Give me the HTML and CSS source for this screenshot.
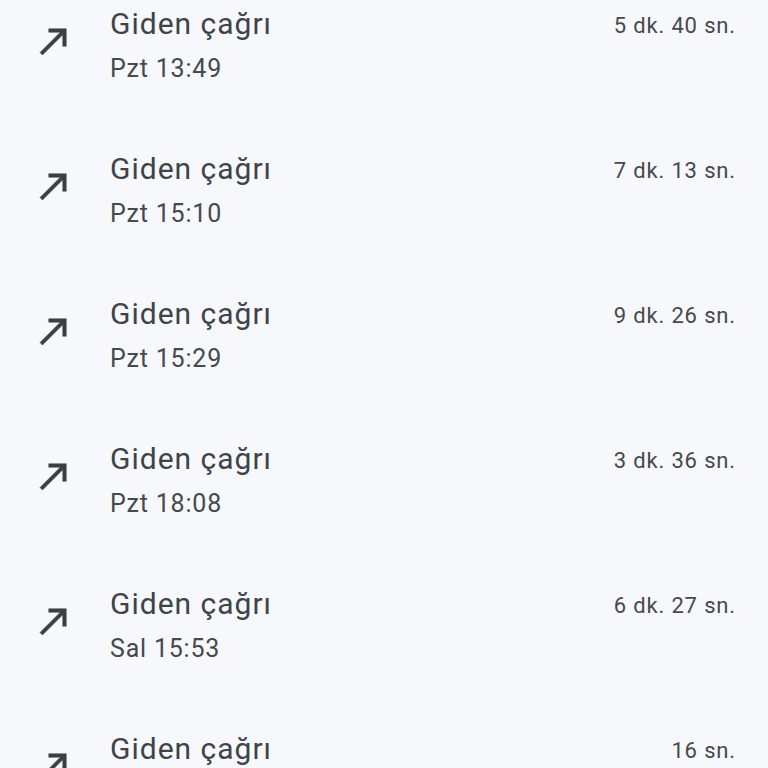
FILE: index.html
```html
<!DOCTYPE html>
<html lang="tr">
<head>
<meta charset="utf-8">
<link rel="stylesheet" href="styles.css">
</head>
<body>
<ul class="calls">
  <li class="call">
    <svg class="icon" viewBox="0 0 24 24"><path d="M9 5v2h6.59L4 18.59 5.41 20 17 8.41V15h2V5z"/></svg>
    <div class="info"><div class="title">Giden çağrı</div><div class="time">Pzt 13:49</div></div>
    <div class="dur">5 dk. 40 sn.</div>
  </li>
  <li class="call">
    <svg class="icon" viewBox="0 0 24 24"><path d="M9 5v2h6.59L4 18.59 5.41 20 17 8.41V15h2V5z"/></svg>
    <div class="info"><div class="title">Giden çağrı</div><div class="time">Pzt 15:10</div></div>
    <div class="dur">7 dk. 13 sn.</div>
  </li>
  <li class="call">
    <svg class="icon" viewBox="0 0 24 24"><path d="M9 5v2h6.59L4 18.59 5.41 20 17 8.41V15h2V5z"/></svg>
    <div class="info"><div class="title">Giden çağrı</div><div class="time">Pzt 15:29</div></div>
    <div class="dur">9 dk. 26 sn.</div>
  </li>
  <li class="call">
    <svg class="icon" viewBox="0 0 24 24"><path d="M9 5v2h6.59L4 18.59 5.41 20 17 8.41V15h2V5z"/></svg>
    <div class="info"><div class="title">Giden çağrı</div><div class="time">Pzt 18:08</div></div>
    <div class="dur">3 dk. 36 sn.</div>
  </li>
  <li class="call">
    <svg class="icon" viewBox="0 0 24 24"><path d="M9 5v2h6.59L4 18.59 5.41 20 17 8.41V15h2V5z"/></svg>
    <div class="info"><div class="title">Giden çağrı</div><div class="time">Sal 15:53</div></div>
    <div class="dur">6 dk. 27 sn.</div>
  </li>
  <li class="call last">
    <svg class="icon" viewBox="0 0 24 24"><path d="M9 5v2h6.59L4 18.59 5.41 20 17 8.41V15h2V5z"/></svg>
    <div class="info"><div class="title">Giden çağrı</div></div>
    <div class="dur">16 sn.</div>
  </li>
</ul>
</body>
</html>
```

FILE: styles.css
```css
html, body {
  margin: 0;
  padding: 0;
  background: #f6f8fc;
  overflow: hidden;
  height: 768px;
}
body {
  font-family: Roboto, "Noto Sans", sans-serif;
  color: #3c3f44;
}
.calls {
  list-style: none;
  margin: 0;
  padding: 4px 32px 0 0;
}
.call {
  display: flex;
  align-items: flex-start;
  height: 145px;
}
.call.last {
  height: 40px;
}
.icon {
  width: 42px;
  height: 42px;
  fill: #3c3f44;
  stroke: #3c3f44;
  stroke-width: 0.3;
  margin: 16px 0 0 33px;
  flex: none;
}
.info {
  margin-left: 35px;
  flex: 1;
}
.title {
  font-size: 30px;
  line-height: 40px;
  letter-spacing: 1px;
  color: #404347;
}
.time {
  font-size: 25px;
  line-height: 50px;
  letter-spacing: 0.8px;
  color: #46494d;
}
.dur {
  font-size: 22px;
  line-height: 40px;
  letter-spacing: 0.85px;
  padding-top: 2px;
  color: #46494d;
}
```
